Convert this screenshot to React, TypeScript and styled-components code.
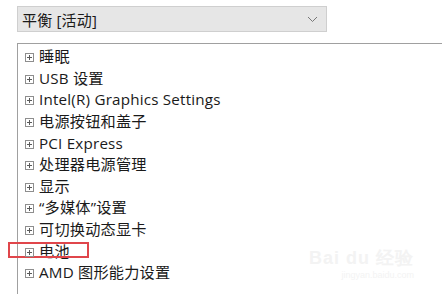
import React from "react";
import styled, { createGlobalStyle } from "styled-components";

const Global = createGlobalStyle`
  html, body { margin: 0; padding: 0; background: #ffffff; }
  body { width: 442px; height: 294px; overflow: hidden; }
  * { box-sizing: border-box; }
`;

const FONT = `"Segoe UI", "Open Sans", "Noto Sans CJK SC", sans-serif`;

const Page = styled.div`
  position: relative;
  width: 442px;
  height: 294px;
  padding: 6px 0 0 17px;
  display: flex;
  flex-direction: column;
  gap: 11px;
  font-family: ${FONT};
  color: #1a1a1a;
`;

const Select = styled.div`
  width: 310px;
  height: 26px;
  background: #e6e6e6;
  border: 1px solid #cfcfcf;
  display: flex;
  align-items: center;
  justify-content: space-between;
  padding: 0 8px 0 4px;
  font-size: 15px;
  letter-spacing: 0.2px;
`;

const Tree = styled.div`
  flex: 1;
  border-top: 1px solid #a0a0a0;
  border-left: 1px solid #a0a0a0;
  padding: 2px 0 0 7px;
  display: flex;
  flex-direction: column;
`;

const Row = styled.div`
  position: relative;
  height: 21.6px;
  display: flex;
  align-items: center;
  gap: 5px;
  font-size: 15.2px;
  letter-spacing: 0.2px;
  white-space: nowrap;
`;

const Label = styled.span`
  line-height: 1;
`;

const Mark = styled.div`
  position: absolute;
  left: -17px;
  top: 2px;
  width: 81px;
  height: 16px;
  border: 2px solid #e0464b;
`;

const Plus = styled.span`
  width: 9px;
  height: 9px;
  margin-top: 2px;
  border: 1px solid #8e8e8e;
  position: relative;
  flex: none;
  &::before, &::after {
    content: "";
    position: absolute;
    background: #5a5a5a;
  }
  &::before { left: 1px; right: 1px; top: 3px; height: 1px; }
  &::after { top: 1px; bottom: 1px; left: 3px; width: 1px; }
`;

const Watermark = styled.div`
  position: absolute;
  right: 28px;
  bottom: 14px;
  color: #f3f3f3;
  font-family: "Liberation Sans", sans-serif;
  display: flex;
  flex-direction: column;
  align-items: flex-end;
  pointer-events: none;
`;

const WmTop = styled.div`
  font-size: 18px;
  font-weight: bold;
  letter-spacing: 1px;
`;

const WmBottom = styled.div`
  font-size: 9px;
`;

const items = [
  "睡眠",
  "USB 设置",
  "Intel(R) Graphics Settings",
  "电源按钮和盖子",
  "PCI Express",
  "处理器电源管理",
  "显示",
  "“多媒体”设置",
  "可切换动态显卡",
  "电池",
  "AMD 图形能力设置",
];

export default function App() {
  return (
    <>
      <Global />
      <Page>
        <Select>
          <span>平衡 [活动]</span>
          <svg width="11" height="7" viewBox="0 0 11 7">
            <path d="M1 1 L5.5 5.5 L10 1" fill="none" stroke="#777" strokeWidth="1" />
          </svg>
        </Select>
        <Tree>
          {items.map((t) => (
            <Row key={t}>
              {t === "电池" && <Mark />}
              <Plus />
              <Label>{t}</Label>
            </Row>
          ))}
        </Tree>
        <Watermark>
          <WmTop>Bai du 经验</WmTop>
          <WmBottom>jingyan.baidu.com</WmBottom>
        </Watermark>
      </Page>
    </>
  );
}
